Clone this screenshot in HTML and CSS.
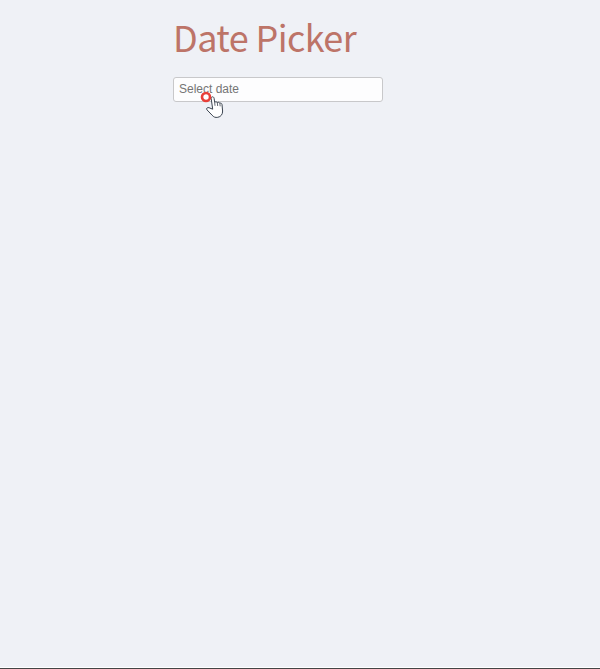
FILE: index.html
```html
<!DOCTYPE html>
<html lang="en">
<head>
<meta charset="utf-8">
<title>Date Picker</title>
<link rel="stylesheet" href="styles.css">
</head>
<body>
<main class="page">
  <div class="picker">
    <h1 class="title">Date Picker</h1>
    <div class="field">
      <input class="date-input" type="text" placeholder="Select date" aria-label="Select date">
      <svg class="pointer" width="28" height="32" viewBox="0 0 28 32" aria-hidden="true">
        <path class="hand" d="M12.7 18.2L11.2 7.7C10.9 5.4 13.7 5.1 14.1 7.3L14.7 11.5C15.5 10.4 17 10.7 17.3 11.7C18.1 10.9 19.5 11.2 19.8 12.3C20.8 11.8 21.8 12.3 22 13.5L22.6 20C22.8 23.3 20.8 25.8 17.8 26.3C15.3 26.8 13.6 26 12.1 24.2L7 18.9C5.8 17.5 7.4 16.1 9 16.7Z"/>
        <path class="fingers" d="M14.7 11.5L15 14.8M17.3 11.7L17.7 15M19.8 12.3L20.2 15.3"/>
        <circle class="click" cx="6" cy="6" r="4"/>
      </svg>
    </div>
  </div>
</main>
</body>
</html>
```
FILE: styles.css
```css
* {
  box-sizing: border-box;
}

body {
  margin: 0;
  background: #eff1f6;
}

.page {
  height: 669px;
  padding: 8px 0 0 173px;
  border-bottom: 1px solid #444;
  box-shadow: inset 0 -1px #fff;
  overflow: hidden;
}

.picker {
  width: 210px;
}

.title {
  height: 57px;
  margin: 0 0 12px;
  font: 400 36px/57px "Noto Sans CJK SC", sans-serif;
  letter-spacing: -0.6px;
  color: #bd7468;
  white-space: nowrap;
}

.field {
  position: relative;
}

.date-input {
  display: block;
  width: 210px;
  height: 25px;
  padding: 0 5px 1px;
  border: 1px solid #c8c8ca;
  border-radius: 3px;
  background: #fdfdfe;
  font: 12px "Liberation Sans", Arial, sans-serif;
}

.date-input::placeholder {
  color: #757575;
  opacity: 1;
}

.pointer {
  position: absolute;
  top: 14px;
  left: 27px;
}

.hand {
  fill: #fff;
  stroke: #3b4450;
  stroke-width: 1;
  stroke-linejoin: round;
}

.fingers {
  fill: none;
  stroke: #3b4450;
  stroke-width: 0.8;
}

.click {
  fill: #fff;
  stroke: #e83f38;
  stroke-width: 2.6;
}
```
